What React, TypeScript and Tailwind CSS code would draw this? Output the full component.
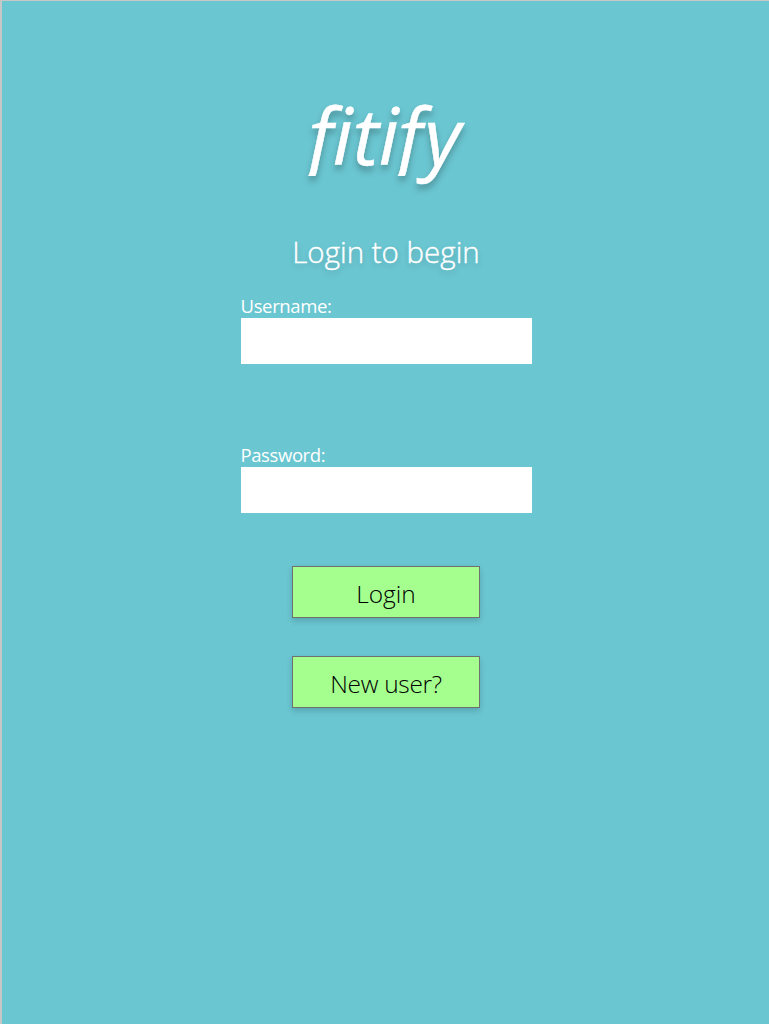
export default function App() {
  return (
    <main className="flex h-[1024px] w-[769px] flex-col items-center overflow-hidden border-t border-l-2 border-[#c6c8c8] bg-[#6ac6d1] pl-[1px] font-['Open_Sans',sans-serif] text-white">
      <h1 className="mt-[79px] flex h-[110px] pr-[3px] text-[79px] leading-[110px] italic drop-shadow-[0_5px_3px_rgba(0,0,0,0.25)] [-webkit-text-stroke:0.5px_white]">
        <span className="block [clip-path:inset(0_-20px_14px_-4px)]">f</span>
        <span>iti</span>
        <span className="-ml-[1px] block [clip-path:inset(0_-20px_14px_-4px)]">f</span>
        <span className="ml-[2px]">y</span>
      </h1>
      <h2 className="mt-[42px] h-[40px] text-[29.5px] leading-[39px] font-light whitespace-nowrap [-webkit-text-stroke:0.4px_white] [text-shadow:0_3px_6px_rgba(0,0,0,0.2)]">Login to begin</h2>
      <label className="mt-[22px] block w-[291px] text-[18.5px] leading-[24px]">
        <span className="block tracking-[-0.35px]">Username:</span>
        <input className="block h-[46px] w-full bg-white text-black outline-none" />
      </label>
      <label className="mt-[79px] block w-[291px] text-[18.5px] leading-[24px]">
        <span className="block tracking-[-0.4px]">Password:</span>
        <input type="password" className="block h-[46px] w-full bg-white text-black outline-none" />
      </label>
      <button className="mt-[53px] h-[52px] w-[188px] border border-[#707070] bg-[#a5ff8f] pt-[4px] text-[24.5px] font-light text-black shadow-[0_3px_6px_rgba(0,0,0,0.16)]">Login</button>
      <button className="mt-[38px] h-[52px] w-[188px] border border-[#707070] bg-[#a5ff8f] pt-[4px] text-[24.5px] font-light tracking-[-0.3px] text-black shadow-[0_3px_6px_rgba(0,0,0,0.16)]">New user?</button>
    </main>
  );
}
